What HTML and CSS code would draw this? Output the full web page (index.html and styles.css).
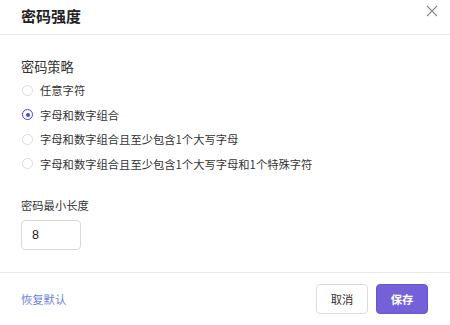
FILE: index.html
```html
<!DOCTYPE html>
<html lang="zh">
<head>
<meta charset="utf-8">
<link rel="stylesheet" href="styles.css">
</head>
<body>
<div class="dialog">
  <div class="header">
    <div class="title">密码强度</div>
    <svg class="close" width="12" height="12" viewBox="0 0 12 12"><path d="M1 1L11 11M11 1L1 11" stroke="#8a8a8a" stroke-width="1.1" fill="none"/></svg>
  </div>
  <div class="body">
    <div class="label">密码策略</div>
    <div class="radios">
      <div class="radio"><span class="dot"></span><span>任意字符</span></div>
      <div class="radio checked"><span class="dot"></span><span>字母和数字组合</span></div>
      <div class="radio"><span class="dot"></span><span>字母和数字组合且至少包含1个大写字母</span></div>
      <div class="radio"><span class="dot"></span><span>字母和数字组合且至少包含1个大写字母和1个特殊字符</span></div>
    </div>
    <div class="label small">密码最小长度</div>
    <div class="input">8</div>
  </div>
  <div class="footer">
    <a class="reset">恢复默认</a>
    <div class="btns">
      <div class="btn cancel">取消</div>
      <div class="btn save">保存</div>
    </div>
  </div>
</div>
</body>
</html>
```
FILE: styles.css
```css
html, body { margin: 0; padding: 0; background: #fff; }
body { font-family: "Noto Sans CJK SC", "Liberation Sans", sans-serif; color: #333; width: 450px; height: 325px; overflow: hidden; }
.dialog { width: 450px; }
.header { height: 35px; border-bottom: 1px solid #e8e8e8; display: flex; align-items: center; justify-content: space-between; padding: 0 12px 0 21px; box-sizing: border-box; }
.title { font-size: 15px; font-weight: bold; color: #222; line-height: 20px; margin-top: -3px; }
.close { margin-top: -13px; }
.body { padding: 22px 21px 0; height: 238px; box-sizing: border-box; border-bottom: 1px solid #e8e8e8; }
.label { font-size: 13.2px; line-height: 20px; color: #333; }
.radios { display: flex; flex-direction: column; gap: 4.5px; margin-top: 3px; margin-bottom: 23px; }
.radio { display: flex; align-items: center; font-size: 11.3px; height: 20px; color: #333; }
.dot { width: 11px; height: 11px; border: 1px solid #dcdcdc; border-radius: 50%; box-sizing: border-box; margin-left: 1px; margin-right: 7px; position: relative; }
.radio.checked .dot { border-color: #4b45d6; }
.radio.checked .dot::after { content: ""; position: absolute; left: 2.5px; top: 2.5px; width: 4px; height: 4px; border-radius: 50%; background: #4b45d6; }
.label.small { font-size: 11.3px; line-height: 16px; }
.input { margin-top: 7px; width: 60px; height: 30px; border: 1px solid #d9d9d9; border-radius: 4px; box-sizing: border-box; font-family: "Liberation Sans", sans-serif; font-size: 12.5px; line-height: 28px; padding-left: 10px; color: #222; }
.footer { display: flex; align-items: center; justify-content: space-between; padding: 11px 22px 0 21px; }
.reset { color: #6f7fe0; font-size: 11.3px; }
.btns { display: flex; gap: 8px; }
.btn { height: 30px; width: 52px; box-sizing: border-box; border-radius: 4px; font-size: 11.3px; display: flex; align-items: center; justify-content: center; }
.cancel { border: 1px solid #dcdcdc; color: #333; background: #fff; }
.save { background: #7460d8; color: #fff; font-weight: bold; border: 1px solid #6a55d0; }
```
